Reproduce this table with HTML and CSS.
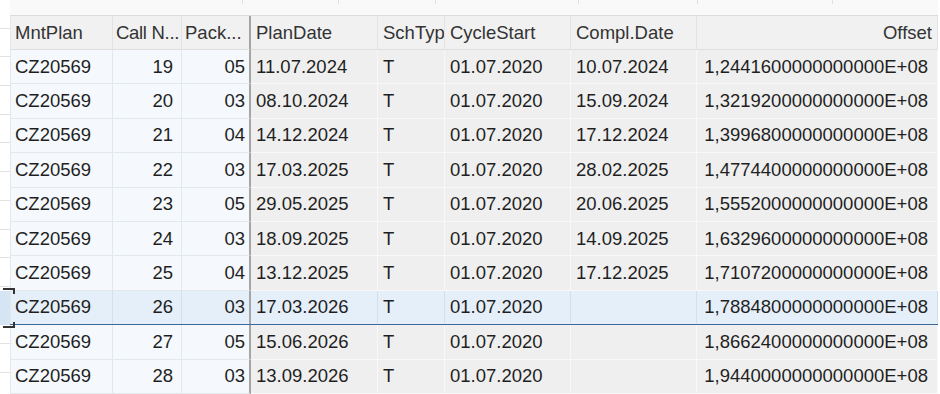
FILE: index.html
```html
<!DOCTYPE html>
<html lang="en">
<head>
  <meta charset="UTF-8">
  <title>Maintenance calls</title>
  <link rel="stylesheet" href="styles.css">
</head>
<body>
  <div class="strip">
    <div class="strip-sel"></div>
  </div>
  <div class="main">
    <div class="topbar">
      <span class="tick" style="width:232px"></span>
      <span class="tick" style="width:95px"></span>
      <span class="tick" style="width:96px"></span>
      <span class="tick" style="width:142px"></span>
      <span class="tick" style="width:118px"></span>
      <span class="tick" style="width:134px"></span>
    </div>

    <div class="row head">
      <div class="c f first">MntPlan</div>
      <div class="c f tight">Call N...</div>
      <div class="c f split">Pack...</div>
      <div class="c">PlanDate</div>
      <div class="c">SchTyp</div>
      <div class="c">CycleStart</div>
      <div class="c">Compl.Date</div>
      <div class="c num">Offset</div>
    </div>

    <div class="row">
      <div class="c f first">CZ20569</div><div class="c f num call">19</div><div class="c f num split">05</div>
      <div class="c">11.07.2024</div><div class="c">T</div><div class="c">01.07.2020</div><div class="c">10.07.2024</div>
      <div class="c num off">1,2441600000000000E+08</div>
    </div>
    <div class="row">
      <div class="c f first">CZ20569</div><div class="c f num call">20</div><div class="c f num split">03</div>
      <div class="c">08.10.2024</div><div class="c">T</div><div class="c">01.07.2020</div><div class="c">15.09.2024</div>
      <div class="c num off">1,3219200000000000E+08</div>
    </div>
    <div class="row">
      <div class="c f first">CZ20569</div><div class="c f num call">21</div><div class="c f num split">04</div>
      <div class="c">14.12.2024</div><div class="c">T</div><div class="c">01.07.2020</div><div class="c">17.12.2024</div>
      <div class="c num off">1,3996800000000000E+08</div>
    </div>
    <div class="row">
      <div class="c f first">CZ20569</div><div class="c f num call">22</div><div class="c f num split">03</div>
      <div class="c">17.03.2025</div><div class="c">T</div><div class="c">01.07.2020</div><div class="c">28.02.2025</div>
      <div class="c num off">1,4774400000000000E+08</div>
    </div>
    <div class="row">
      <div class="c f first">CZ20569</div><div class="c f num call">23</div><div class="c f num split">05</div>
      <div class="c">29.05.2025</div><div class="c">T</div><div class="c">01.07.2020</div><div class="c">20.06.2025</div>
      <div class="c num off">1,5552000000000000E+08</div>
    </div>
    <div class="row">
      <div class="c f first">CZ20569</div><div class="c f num call">24</div><div class="c f num split">03</div>
      <div class="c">18.09.2025</div><div class="c">T</div><div class="c">01.07.2020</div><div class="c">14.09.2025</div>
      <div class="c num off">1,6329600000000000E+08</div>
    </div>
    <div class="row">
      <div class="c f first">CZ20569</div><div class="c f num call">25</div><div class="c f num split">04</div>
      <div class="c">13.12.2025</div><div class="c">T</div><div class="c">01.07.2020</div><div class="c">17.12.2025</div>
      <div class="c num off">1,7107200000000000E+08</div>
    </div>
    <div class="row sel">
      <div class="c f first">CZ20569</div><div class="c f num call">26</div><div class="c f num split">03</div>
      <div class="c">17.03.2026</div><div class="c">T</div><div class="c">01.07.2020</div><div class="c"></div>
      <div class="c num off">1,7884800000000000E+08</div>
    </div>
    <div class="row">
      <div class="c f first">CZ20569</div><div class="c f num call">27</div><div class="c f num split">05</div>
      <div class="c">15.06.2026</div><div class="c">T</div><div class="c">01.07.2020</div><div class="c"></div>
      <div class="c num off">1,8662400000000000E+08</div>
    </div>
    <div class="row">
      <div class="c f first">CZ20569</div><div class="c f num call">28</div><div class="c f num split">03</div>
      <div class="c">13.09.2026</div><div class="c">T</div><div class="c">01.07.2020</div><div class="c"></div>
      <div class="c num off">1,9440000000000000E+08</div>
    </div>
  </div>
</body>
</html>
```

FILE: styles.css
```css
body {
  margin: 0;
  height: 394px;
  overflow: hidden;
  display: flex;
  background: #fff;
  font-family: "Liberation Sans", Arial, sans-serif;
  font-size: 18.5px;
  color: #1f1f1f;
}

/* row header strip on the far left */
.strip {
  position: relative;
  flex: none;
  width: 10px;
  background: repeating-linear-gradient(to bottom, #fff 0, #fff 27.7px, #e2e2e2 27.7px, #e2e2e2 28.7px);
}

.strip-sel {
  position: absolute;
  left: 0;
  top: 291px;
  width: 10px;
  height: 34px;
  background: #d6e5f3;
}

/* focus corner marks */
.strip-sel::before,
.strip-sel::after {
  content: "";
  position: absolute;
  left: 3px;
  width: 10px;
  height: 4px;
  z-index: 2;
  border-right: 2px solid #333;
}

.strip-sel::before {
  top: -3px;
  border-top: 2px solid #333;
}

.strip-sel::after {
  bottom: -3px;
  border-bottom: 2px solid #333;
}

.main {
  flex: none;
  width: 928px;
}

.topbar {
  box-sizing: border-box;
  height: 16px;
  display: flex;
  align-items: flex-start;
  background: #f9f9f9;
  border-bottom: 1px solid #dcdcdc;
}

.tick {
  flex: none;
  height: 4px;
  border-right: 1px solid #e0e0e0;
}

.row {
  box-sizing: border-box;
  display: grid;
  grid-template-columns: 103px 69px 69px 127px 67px 126px 126px 241px;
  height: 34.4px;
}

.row.head {
  height: 34px;
}

.c {
  box-sizing: border-box;
  display: flex;
  align-items: center;
  padding: 0 5px;
  white-space: nowrap;
  overflow: hidden;
  background: #efefef;
  border-right: 1px solid #f8f8f8;
  border-bottom: 1px solid #f8f8f8;
}

.c.f {
  background: #f5f9fd;
  border-right-color: #e3e8ed;
  border-bottom-color: #e3e8ed;
}

.c.first {
  border-left: 1px solid #e3e8ed;
  padding-left: 4px;
}

.c.tight {
  padding: 0 0 0 3px;
  letter-spacing: -0.3px;
}

.c.split {
  border-right: 2px solid #a5a5a5;
  padding-left: 3px;
  padding-right: 4px;
}

.c.num {
  justify-content: flex-end;
}

.c.call {
  padding-right: 8px;
}

.c.off {
  padding-right: 9px;
}

.head .c {
  background: #f1f1f1;
  color: #333;
  border-right-color: #e3e3e3;
  border-bottom-color: #dedede;
}

.head .c.split {
  border-right-color: #a5a5a5;
}

.row.sel {
  margin-top: -1px;
  height: 35.4px;
  border-top: 1px solid #3b6898;
  border-bottom: 1px solid #3b6898;
}

.sel .c,
.sel .c.f {
  background: #e5eff9;
  border-bottom: 0;
  border-right-color: #d3dfeb;
}

.sel .c.split {
  border-right-color: #a5a5a5;
}
```
